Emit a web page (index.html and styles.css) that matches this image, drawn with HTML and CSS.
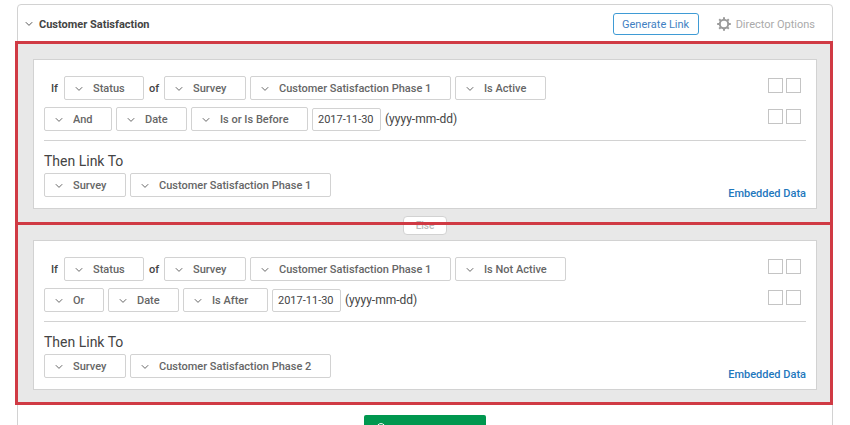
FILE: index.html
```html
<!DOCTYPE html>
<html lang="en">
<head>
    <meta charset="UTF-8">
    <meta name="viewport" content="width=device-width, initial-scale=1.0">
    <title>Customer Satisfaction - Survey Director</title>
    <link rel="stylesheet" href="styles.css">
</head>
<body>
    <main class="panel">
        <header class="panel-header">
            <svg class="chevron" viewBox="0 0 8 6" aria-hidden="true"><path d="M0.8 1.2 4 4.4 7.2 1.2"/></svg>
            <h1>Customer Satisfaction</h1>
            <button type="button" class="generate-btn">Generate Link</button>
            <button type="button" class="options-btn">
                <svg class="gear" viewBox="0 0 14 14" aria-hidden="true">
                    <circle cx="7" cy="7" r="4.2"/>
                    <path d="M7 0.2v2.4M7 11.4v2.4M0.2 7h2.4M11.4 7h2.4M2.2 2.2l1.7 1.7M10.1 10.1l1.7 1.7M2.2 11.8l1.7-1.7M10.1 3.9l1.7-1.7"/>
                </svg>
                Director Options
            </button>
        </header>

        <div class="rules">
            <section class="rule">
                <div class="card">
                    <div class="row">
                        <span class="if">If</span>
                        <select aria-label="Field"><option>Status</option></select>
                        <span class="of">of</span>
                        <select aria-label="Source"><option>Survey</option></select>
                        <select aria-label="Survey name"><option>Customer Satisfaction Phase 1</option></select>
                        <select aria-label="Operator"><option>Is Active</option></select>
                        <span class="row-tools">
                            <button type="button" aria-label="Remove condition"></button>
                            <button type="button" aria-label="Add condition"></button>
                        </span>
                    </div>
                    <div class="row">
                        <select aria-label="Conjunction"><option>And</option></select>
                        <select aria-label="Field"><option>Date</option></select>
                        <select aria-label="Operator"><option>Is or Is Before</option></select>
                        <input type="text" id="date1" value="2017-11-30">
                        <label for="date1">(yyyy-mm-dd)</label>
                        <span class="row-tools">
                            <button type="button" aria-label="Remove condition"></button>
                            <button type="button" aria-label="Add condition"></button>
                        </span>
                    </div>
                    <div class="then">
                        <h2>Then Link To</h2>
                        <div class="row">
                            <select aria-label="Link type"><option>Survey</option></select>
                            <select aria-label="Link target"><option>Customer Satisfaction Phase 1</option></select>
                            <a href="#" class="embedded">Embedded Data</a>
                        </div>
                    </div>
                </div>
            </section>

            <div class="joint">
                <button type="button" class="else-btn">Else</button>
            </div>

            <section class="rule">
                <div class="card">
                    <div class="row">
                        <span class="if">If</span>
                        <select aria-label="Field"><option>Status</option></select>
                        <span class="of">of</span>
                        <select aria-label="Source"><option>Survey</option></select>
                        <select aria-label="Survey name"><option>Customer Satisfaction Phase 1</option></select>
                        <select aria-label="Operator"><option>Is Not Active</option></select>
                        <span class="row-tools">
                            <button type="button" aria-label="Remove condition"></button>
                            <button type="button" aria-label="Add condition"></button>
                        </span>
                    </div>
                    <div class="row">
                        <select aria-label="Conjunction"><option>Or</option></select>
                        <select aria-label="Field"><option>Date</option></select>
                        <select aria-label="Operator"><option>Is After</option></select>
                        <input type="text" id="date2" value="2017-11-30">
                        <label for="date2">(yyyy-mm-dd)</label>
                        <span class="row-tools">
                            <button type="button" aria-label="Remove condition"></button>
                            <button type="button" aria-label="Add condition"></button>
                        </span>
                    </div>
                    <div class="then">
                        <h2>Then Link To</h2>
                        <div class="row">
                            <select aria-label="Link type"><option>Survey</option></select>
                            <select aria-label="Link target"><option>Customer Satisfaction Phase 2</option></select>
                            <a href="#" class="embedded">Embedded Data</a>
                        </div>
                    </div>
                </div>
            </section>
        </div>

        <footer class="panel-footer">
            <button type="button" class="add-btn" aria-label="Add condition set">
                <svg class="plus" viewBox="0 0 10 10" aria-hidden="true"><circle cx="5" cy="5" r="4.4"/><path d="M5 2.5v5M2.5 5h5"/></svg>
            </button>
        </footer>
    </main>
</body>
</html>
```
FILE: styles.css
```css
:root {
    --red: #d03a44;
    --border: #d2d2d2;
    --text: #444;
    --blue: #1f78bd;
    --green: #00974f;
}
* { box-sizing: border-box; }
body {
    margin: 0;
    height: 100vh;
    overflow: hidden;
    background: #fff;
    color: var(--text);
    font-family: Roboto, Arial, sans-serif;
    font-size: 11px;
    font-weight: 500;
}
button, select, input {
    font: inherit;
    margin: 0;
}
button { cursor: pointer; }

.panel {
    margin: 4px 17px 0;
    border: 1px solid var(--border);
    border-radius: 4px;
}
.panel-header {
    display: flex;
    align-items: center;
    height: 36px;
    padding: 2px 17px 0 7px;
}
.chevron {
    width: 8px;
    height: 6px;
    margin-right: 6px;
    fill: none;
    stroke: #555;
}
h1 {
    margin: 0 auto 0 0;
    font-size: 11px;
    font-weight: 700;
}
.generate-btn {
    height: 22px;
    width: 86px;
    padding: 0;
    background: #fff;
    border: 1px solid #3f9bd5;
    border-radius: 3px;
    color: #3f7fc2;
    font-weight: 400;
}
.options-btn {
    display: flex;
    align-items: center;
    gap: 5px;
    margin-left: 18px;
    padding: 0;
    background: none;
    border: none;
    color: #aaa;
    font-weight: 400;
}
.gear {
    width: 14px;
    height: 14px;
    fill: none;
    stroke: #9b9b9b;
    stroke-width: 2;
}

/* condition sets */
.rules {
    margin: 0 -1px 0 -3px;
    border: 3px solid var(--red);
}
.rule {
    padding: 15px 13px 13px 15px;
    background: #e8e8e8;
}
.rule:last-child { padding-bottom: 12px; }
.card {
    padding: 16px 10px 11px;
    background: #fff;
    border: 1px solid var(--border);
}
.row {
    display: flex;
    align-items: center;
    gap: 4px;
}
.row + .row { margin-top: 7px; }
.if {
    width: 16px;
    padding-left: 7px;
}
.of {
    width: 12px;
    text-align: center;
}
select {
    appearance: none;
    height: 24px;
    padding: 0 18px 0 28px;
    background: #fff url("data:image/svg+xml,%3Csvg xmlns='http://www.w3.org/2000/svg' width='8' height='6' fill='none' stroke='%23666'%3E%3Cpath d='M0.8 1.2 4 4.4 7.2 1.2'/%3E%3C/svg%3E") no-repeat 10px 9px;
    border: 1px solid var(--border);
    border-radius: 2px;
    color: #666;
}
input[type="text"] {
    width: 69px;
    height: 23px;
    padding: 0 5px;
    border: 1px solid var(--border);
    border-radius: 2px;
    color: var(--text);
    font-weight: 400;
}
label {
    font-size: 12px;
    font-weight: 400;
}
.row-tools {
    display: flex;
    gap: 3px;
    margin: 0 5px 6px auto;
}
.row-tools button {
    width: 15px;
    height: 15px;
    padding: 0;
    background: #fff;
    border: 1px solid #c4c4c4;
}
.then {
    margin-top: 9px;
    padding-top: 12px;
    border-top: 1px solid var(--border);
}
h2 {
    margin: 0 0 4px;
    font-size: 14px;
    font-weight: 400;
    line-height: 16px;
}
.embedded {
    align-self: flex-end;
    margin: 0 0 -3px auto;
    color: var(--blue);
    text-decoration: none;
}

/* red line runs over the Else button */
.joint {
    position: relative;
    height: 3px;
}
.joint::after {
    content: "";
    position: absolute;
    inset: 0;
    background: var(--red);
}
.else-btn {
    position: absolute;
    top: -6px;
    left: 50%;
    width: 44px;
    height: 19px;
    margin-left: -21px;
    padding: 0;
    background: #fff;
    border: 1px solid var(--border);
    border-radius: 4px;
    color: #bbb;
    font-size: 10px;
}
.panel-footer {
    display: flex;
    justify-content: center;
    padding: 10px 0 16px;
}
.add-btn {
    display: flex;
    align-items: center;
    width: 122px;
    height: 26px;
    padding: 0 12px;
    background: var(--green);
    border: none;
    border-radius: 2px;
}
.plus {
    width: 10px;
    height: 10px;
    fill: none;
    stroke: #fff;
}
```
